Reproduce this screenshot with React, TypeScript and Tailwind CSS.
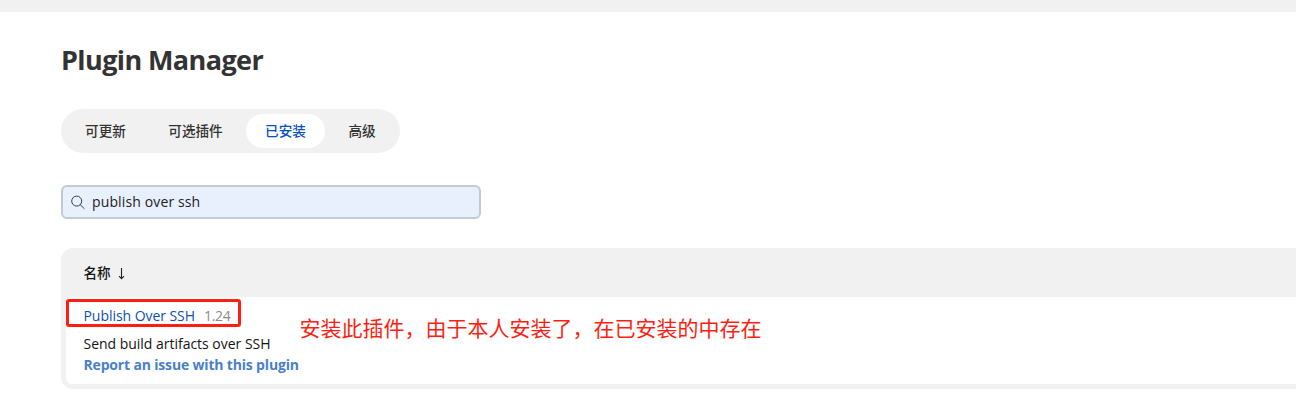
import React from "react";

const tabs = [
  { label: "可更新", width: "w-[79px]" },
  { label: "可选插件", width: "w-[93px]" },
  { label: "已安装", width: "w-[79px]", active: true },
  { label: "高级", width: "w-[66px]" },
];

function SearchIcon() {
  return (
    <svg className="h-[15px] w-[15px] shrink-0" viewBox="0 0 15 15" fill="none" stroke="#3b3f46" strokeWidth="1">
      <circle cx="6.7" cy="6.1" r="5" />
      <path d="M10.3 9.8 14.2 13.6" strokeLinecap="round" />
    </svg>
  );
}

function SortArrow() {
  return (
    <svg className="ml-[7px] h-[13px] w-[7px]" viewBox="0 0 7 13" fill="none" stroke="#222" strokeWidth="1.1">
      <path d="M3.5 1v10.6M1 9.1l2.5 2.6L6 9.1" />
    </svg>
  );
}

export default function App() {
  return (
    <div className="flex h-[417px] w-full flex-col overflow-hidden bg-white font-['Open_Sans','Noto_Sans_CJK_SC',sans-serif] whitespace-nowrap text-[#141414]">
      <div className="h-3 shrink-0 bg-[#f1f1f1]" />
      <main className="flex flex-col pl-[61px]">
        <h1 className="mt-[28px] h-[41px] text-[27px] leading-[40px] font-bold tracking-[-0.6px] text-[#333]">
          Plugin Manager
        </h1>

        <nav className="mt-7 flex h-11 w-[339px] items-center gap-1 rounded-full bg-[#f1f1f1] p-[5px]">
          {tabs.map((tab) => (
            <button
              key={tab.label}
              className={`${tab.width} flex h-[34px] items-center justify-center rounded-full text-[13.6px] leading-none font-medium ${
                tab.active ? "bg-white text-[#0b4fc0]" : "text-[#333]"
              }`}
            >
              {tab.label}
            </button>
          ))}
        </nav>

        <div className="mt-8 flex h-[34px] w-[420px] items-center rounded-md border-2 border-[#c2cbd1] bg-[#e8effd] pl-[7px]">
          <SearchIcon />
          <span className="ml-[7px] text-[14px] leading-5 tracking-[0.13px] text-[#222]">publish over ssh</span>
        </div>

        <section className="mt-[29px] flex h-[141px] flex-col rounded-l-xl bg-[#f1f1f1] pb-[5px] pl-[5px]">
          <div className="flex h-[49px] items-center pt-px pl-[17.5px] text-[13.6px] text-[#141414]">
            <span className="font-medium">名称</span>
            <SortArrow />
          </div>
          <div className="relative flex h-[87px] flex-col rounded-l-md bg-white pl-[17.5px]">
            <div className="mt-[9px] flex h-5 items-center text-[14px] leading-5">
              <a className="tracking-[-0.05px] text-[#0b4fb8]">Publish Over SSH</a>
              <span className="ml-[9px] tracking-[-0.3px] text-[#8a8b90]">1.24</span>
            </div>
            <p className="mt-2 h-5 text-[14px] leading-5 tracking-[-0.02px]">Send build artifacts over SSH</p>
            <a className="mt-px h-5 text-[14px] leading-5 font-bold tracking-[-0.17px] text-[#4a80ca]">
              Report an issue with this plugin
            </a>
            <div className="absolute top-[2px] left-0 h-7 w-[175px] rounded-[3px] border-[3px] border-[#fe1e12]" />
            <div className="absolute top-[16px] left-[233.5px] text-[21px] leading-[30px] font-normal text-[#fe1e12]">
              安装此插件，由于本人安装了，在已安装的中存在
            </div>
          </div>
        </section>
      </main>
    </div>
  );
}
